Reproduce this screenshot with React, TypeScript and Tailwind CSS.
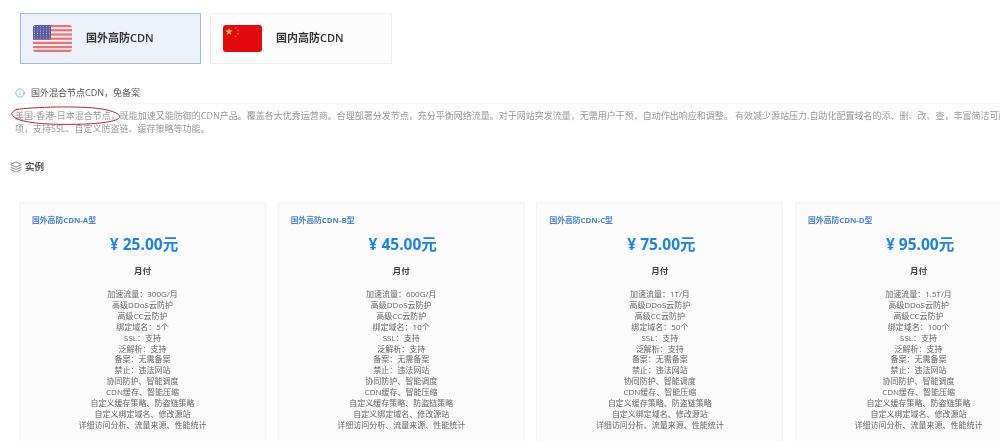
import { Info, Layers } from "lucide-react";

const plans = [
  { name: "国外高防CDN-A型", price: "25.00", traffic: "300G/月", domains: "5个" },
  { name: "国外高防CDN-B型", price: "45.00", traffic: "600G/月", domains: "10个" },
  { name: "国外高防CDN-C型", price: "75.00", traffic: "1T/月", domains: "50个" },
  { name: "国外高防CDN-D型", price: "95.00", traffic: "1.5T/月", domains: "100个" },
];

const UsFlag = () => (
  <svg width="39" height="27" viewBox="0 0 39 27">
    <defs>
      <clipPath id="us-flag-clip">
        <rect width="39" height="27" rx="3" />
      </clipPath>
    </defs>
    <g clipPath="url(#us-flag-clip)">
      <rect width="39" height="27" fill="#fbeeee" />
      {[0, 4.2, 8.4, 12.6, 16.8, 21, 24.8].map((y) => (
        <rect key={y} y={y} width="39" height="2.2" fill="#e8727a" />
      ))}
      <rect width="18" height="14.6" fill="#5a5ba0" />
      {[1.5, 3.8, 6.1, 8.4, 10.7, 13].map((y) =>
        [1.5, 4.5, 7.5, 10.5, 13.5, 16.5].map((x) => (
          <circle key={`${x}-${y}`} cx={x} cy={y} r="0.55" fill="#b4b6d8" />
        ))
      )}
    </g>
  </svg>
);

const CnFlag = () => (
  <svg width="39" height="27" viewBox="0 0 39 27">
    <rect width="39" height="27" rx="3" fill="#e20a0f" />
    <polygon
      points="6,3 6.9,5.6 9.7,5.6 7.5,7.2 8.3,9.9 6,8.3 3.7,9.9 4.5,7.2 2.3,5.6 5.1,5.6"
      fill="#f7d32c"
    />
    <circle cx="12.8" cy="2.8" r="0.6" fill="#f0b82c" />
    <circle cx="15" cy="5.4" r="0.6" fill="#f0b82c" />
    <circle cx="15" cy="8.6" r="0.6" fill="#f0b82c" />
    <circle cx="12.8" cy="11.4" r="0.6" fill="#f0b82c" />
  </svg>
);

function PlanCard({ plan }: { plan: (typeof plans)[number] }) {
  const features = [
    `加速流量：${plan.traffic}`,
    "高级DDoS云防护",
    "高级CC云防护",
    `绑定域名：${plan.domains}`,
    "SSL：支持",
    "泛解析：支持",
    "备案：无需备案",
    "禁止：违法网站",
    "协同防护、智能调度",
    "CDN缓存、智能压缩",
    "自定义缓存策略、防盗链策略",
    "自定义绑定域名、修改源站",
    "详细访问分析、流量来源、性能统计",
  ];
  return (
    <div className="w-[247px] shrink-0 h-[260px] bg-[#fbfbfc] border border-[#f4f4f6] px-3 pt-[12px]">
      <div className="text-[7.8px] leading-[11px] font-bold text-[#4d86c4]">{plan.name}</div>
      <div className="mt-[7px] pl-[3px] text-center text-[15.5px] leading-[22px] font-bold text-[#1c83e0]">¥ {plan.price}元</div>
      <div className="mt-[10px] text-center text-[8.5px] leading-[12px] font-bold text-[#444]">月付</div>
      <ul className="mt-[12px] text-center text-[8px] leading-[10.9px] text-[#666]">
        {features.map((f) => (
          <li key={f}>{f}</li>
        ))}
      </ul>
    </div>
  );
}

export default function App() {
  return (
    <div className="w-[1000px] h-[441px] overflow-hidden bg-white font-['Open_Sans','Noto_Sans_CJK_SC',sans-serif]">
      <div className="relative w-[1070px] blur-[0.3px]">
        {/* Tabs */}
        <div className="flex gap-[9px] pl-5 pt-[13px]">
          <div className="flex items-center w-[181px] h-[51px] bg-[#edf2fa] border border-[#9db8d2] pl-3">
            <UsFlag />
            <span className="ml-[14px] text-[11px] font-semibold text-[#333]">国外高防CDN</span>
          </div>
          <div className="flex items-center w-[182px] h-[51px] bg-[#fcfcfd] border border-[#eeeff1] pl-3">
            <CnFlag />
            <span className="ml-[14px] text-[11px] font-semibold text-[#333]">国内高防CDN</span>
          </div>
        </div>

        {/* Intro */}
        <div className="flex items-center gap-[6px] pl-[15px] mt-[22px] h-[14px]">
          <Info size={10} strokeWidth={1.5} className="text-[#3d9bc4]" />
          <span className="text-[9px] leading-[14px] text-[#555]">国外混合节点CDN，免备案</span>
        </div>
        <div className="mt-[3px] mx-[15px] border-t border-dotted border-[#eeeeee]" />
        <div className="pl-[15px] pt-[5px] text-[9px] leading-[13px] text-[#999] whitespace-nowrap">
          <div>
            美国-香港-日本混合节点，既能加速又能防御的CDN产品。覆盖各大优秀运营商。合理部署分发节点，充分平衡网络流量。对于网站突发流量，无需用户干预，自动作出响应和调整。
            有效减少源站压力.自助化配置域名的添、删、改、查，丰富简洁可配置选
          </div>
          <div>项，支持SSL、自定义防盗链、缓存策略等功能。</div>
        </div>

        {/* Hand-drawn annotation over the text */}
        <svg width="112" height="20" viewBox="0 0 112 20" className="absolute left-[10px] top-[106px]" fill="none">
          <path
            d="M6 3.5C22 1 70 -0.5 92 3C104 5 111 8.5 109.5 11.5C106 17 78 18.6 52 18.4C30 18.2 10 16 4 11C0.5 7.8 1 5.5 8 3"
            stroke="#b3272d"
            strokeWidth="1"
          />
        </svg>

        {/* Section heading */}
        <div className="flex items-center gap-[3px] pl-[10px] mt-[25px] h-[14px] text-[#555]">
          <Layers size={12} strokeWidth={1.3} />
          <span className="text-[9.5px] leading-[14px] font-semibold">实例</span>
        </div>

        {/* Plans */}
        <div className="flex gap-[11.7px] pl-[19px] mt-[28px]">
          {plans.map((p) => (
            <PlanCard key={p.name} plan={p} />
          ))}
        </div>
      </div>
    </div>
  );
}
